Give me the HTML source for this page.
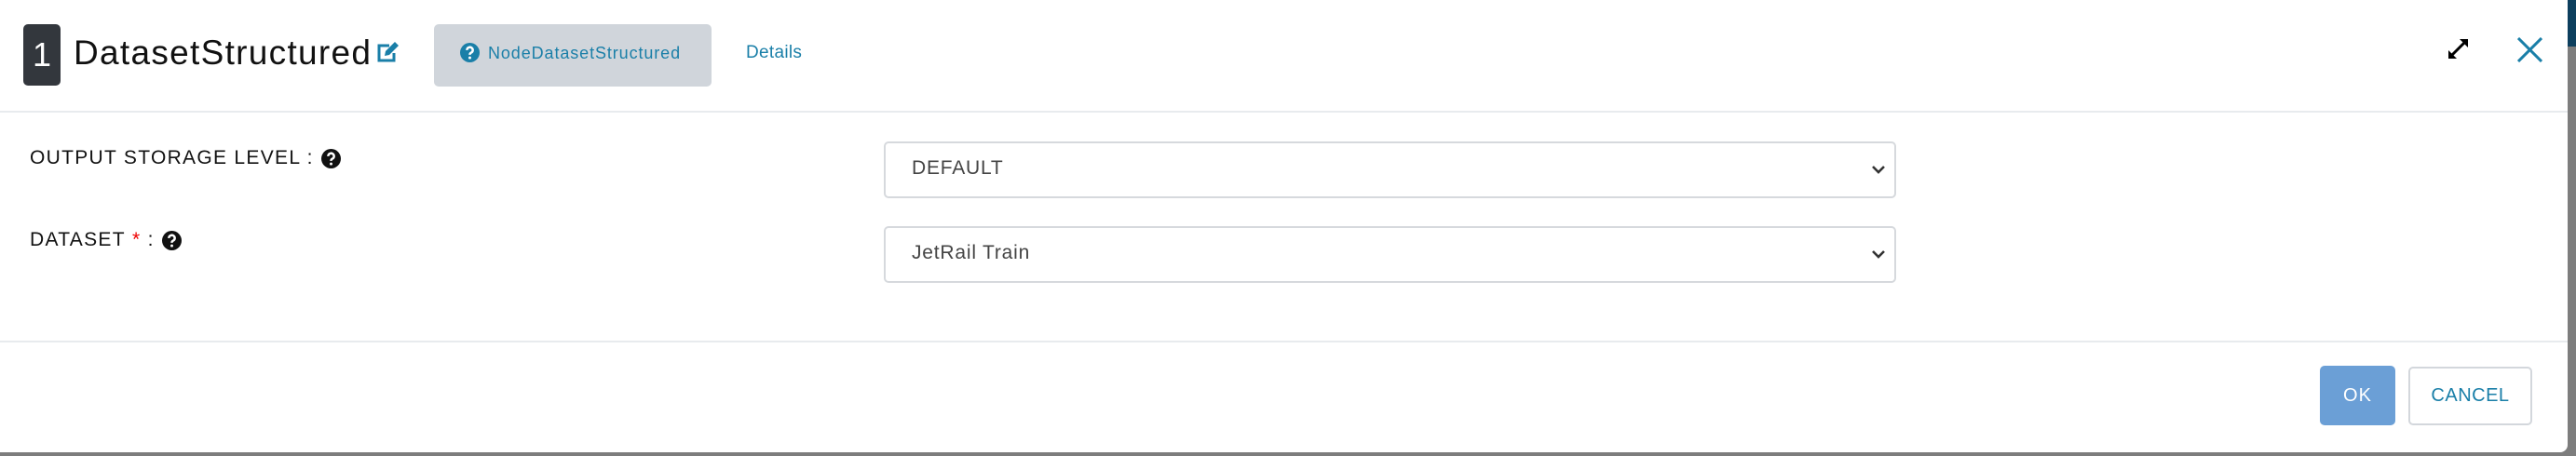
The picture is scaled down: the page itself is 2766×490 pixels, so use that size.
<!DOCTYPE html>
<html><head><meta charset="utf-8"><style>
*{margin:0;padding:0;box-sizing:border-box}
body{width:2766px;height:490px;background:#7d7d7d;position:relative;overflow:hidden;font-family:"Liberation Sans",sans-serif}
.modal{position:absolute;left:0;top:0;width:2757px;height:486px;background:#fff;border-radius:0 0 8px 0}
.abs{position:absolute}
.badge{left:25px;top:26px;width:40px;height:66px;background:#33373d;border-radius:5px;color:#fff;font-size:36px;line-height:66px;text-align:center}
.title{left:79px;top:29px;font-size:37px;line-height:56px;color:#111;letter-spacing:1.3px;white-space:nowrap}
.tab{left:466px;top:26px;width:298px;height:67px;background:#d0d5db;border-radius:5px}
.tabtxt{left:524px;top:47px;font-size:18px;color:#1a7fa8;letter-spacing:0.9px}
.details{left:801px;top:46px;font-size:19px;color:#1a7fa8;letter-spacing:0.3px}
.sep{left:0;width:2757px;height:2px;background:#e8ebee}
.lbl{left:32px;font-size:21px;color:#111;letter-spacing:1.3px;white-space:nowrap;display:flex;align-items:center}
.lbl svg{margin-left:8px}
.sel{left:949px;width:1087px;height:61px;border:2px solid #d6d9dd;border-radius:5px}
.seltxt{left:979px;font-size:21px;color:#444;letter-spacing:0.8px}
.ok{left:2491px;top:393px;width:81px;height:64px;background:#6b9fd6;border-radius:5px;color:#fff;font-size:20px;line-height:64px;text-align:center;letter-spacing:1px}
.cancel{left:2586px;top:394px;width:133px;height:63px;border:2px solid #d3d7dc;border-radius:5px;color:#1a7fa8;font-size:20px;line-height:59px;text-align:center;letter-spacing:0.5px}
</style></head><body>
<div class="abs" style="left:2757px;top:0;width:9px;height:50px;background:#0d3f5e"></div>
<div class="modal">
<div class="abs badge">1</div>
<div class="abs title">DatasetStructured</div>
<svg class="abs" style="left:403px;top:44px" width="27" height="24" viewBox="0 0 27 24"><path d="M15 5H4v16h16v-8" fill="none" stroke="#1a7fa8" stroke-width="3"/><path d="M10 16l1-5L21 1l4 4L15 15z" fill="#1a7fa8"/></svg>
<div class="abs tab"></div>
<svg class="abs" style="left:494px;top:46px" width="21" height="21" viewBox="0 0 20 20"><circle cx="10" cy="10" r="10" fill="#1a7fa8"/><path d="M7 7.5a3 3 0 1 1 4 2.8c-1 .5-1 1-1 2" fill="none" stroke="#fff" stroke-width="2.4"/><circle cx="10" cy="15.3" r="1.4" fill="#fff"/></svg>
<div class="abs tabtxt">NodeDatasetStructured</div>
<div class="abs details">Details</div>
<svg class="abs" style="left:2627px;top:40px" width="25" height="25" viewBox="0 0 25 25"><path d="M4 21L21 4" stroke="#000" stroke-width="3"/><path d="M14 2h9v9zM2 14v9h9z" fill="#000"/></svg>
<svg class="abs" style="left:2703px;top:40px" width="27" height="27" viewBox="0 0 27 27"><path d="M1 1L26 26M26 1L1 26" stroke="#1a7fa8" stroke-width="3"/></svg>
<div class="abs sep" style="top:119px"></div>
<div class="abs lbl" style="top:158px">OUTPUT STORAGE LEVEL :<svg width="21" height="21" viewBox="0 0 20 20"><circle cx="10" cy="10" r="10" fill="#111"/><path d="M7 7.5a3 3 0 1 1 4 2.8c-1 .5-1 1-1 2" fill="none" stroke="#fff" stroke-width="2.4"/><circle cx="10" cy="15.3" r="1.4" fill="#fff"/></svg></div>
<div class="abs lbl" style="top:246px">DATASET&nbsp;<span style="color:#e00">*</span>&nbsp;:<svg width="21" height="21" viewBox="0 0 20 20"><circle cx="10" cy="10" r="10" fill="#111"/><path d="M7 7.5a3 3 0 1 1 4 2.8c-1 .5-1 1-1 2" fill="none" stroke="#fff" stroke-width="2.4"/><circle cx="10" cy="15.3" r="1.4" fill="#fff"/></svg></div>
<div class="abs sel" style="top:152px"></div>
<div class="abs seltxt" style="top:169px">DEFAULT</div>
<svg class="abs" style="left:2009px;top:177px" width="16" height="11" viewBox="0 0 16 11"><path d="M2 2l6 6 6-6" fill="none" stroke="#333" stroke-width="2.6"/></svg>
<div class="abs sel" style="top:243px"></div>
<div class="abs seltxt" style="top:260px">JetRail Train</div>
<svg class="abs" style="left:2009px;top:268px" width="16" height="11" viewBox="0 0 16 11"><path d="M2 2l6 6 6-6" fill="none" stroke="#333" stroke-width="2.6"/></svg>
<div class="abs sep" style="top:366px"></div>
<div class="abs ok">OK</div>
<div class="abs cancel">CANCEL</div>
</div>
</body></html>
